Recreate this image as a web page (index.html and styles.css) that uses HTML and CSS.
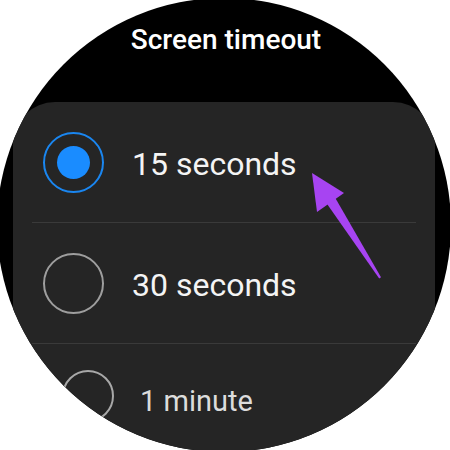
FILE: index.html
```html
<!DOCTYPE html>
<html>
<head>
<meta charset="utf-8">
<link rel="stylesheet" href="styles.css">
</head>
<body>
<div class="stage">
  <div class="watch">
    <div class="title">Screen timeout</div>
    <div class="card">
      <div class="row">
        <span class="radio on"><span class="dot"></span></span>
        <span class="label">15 seconds</span>
      </div>
      <div class="divider"></div>
      <div class="row">
        <span class="radio"></span>
        <span class="label">30 seconds</span>
      </div>
      <div class="divider"></div>
      <div class="row row-far">
        <span class="radio small"></span>
        <span class="label small-label">1 minute</span>
      </div>
    </div>
  </div>
  <svg class="arrow" width="450" height="450" viewBox="0 0 450 450">
    <polygon points="312,173 344,193 317,212" fill="#a744f2"/>
    <polygon points="333,194 325,201 379.2,278.5 381,277.3" fill="#a744f2"/>
  </svg>
</div>
</body>
</html>
```

FILE: styles.css
```css
html, body {
  margin: 0;
  padding: 0;
  background: #ffffff;
}
.stage {
  position: relative;
  width: 450px;
  height: 450px;
  overflow: hidden;
  background: #ffffff;
}
.watch {
  width: 454px;
  height: 454px;
  margin-left: -3px;
  margin-top: -2px;
  border-radius: 50%;
  background: #000000;
  overflow: hidden;
  display: flex;
  flex-direction: column;
  font-family: Roboto, "Liberation Sans", sans-serif;
}
.title {
  box-sizing: border-box;
  height: 104px;
  padding-top: 28px;
  text-align: center;
  color: #ffffff;
  font-size: 28px;
  line-height: 28px;
  font-weight: 500;
  padding-left: 4px;
}
.card {
  flex: 1;
  margin-left: 16px;
  width: 422px;
  background: #252525;
  border-radius: 42px 42px 0 0;
  display: flex;
  flex-direction: column;
}
.row {
  height: 120px;
  display: flex;
  align-items: center;
  padding-left: 30px;
  gap: 28px;
}
.radio {
  box-sizing: border-box;
  width: 61px;
  height: 61px;
  border-radius: 50%;
  border: 2px solid #9e9e9e;
  display: flex;
  align-items: center;
  justify-content: center;
  flex: none;
}
.radio.on {
  border-color: #1a86f0;
}
.dot {
  width: 33px;
  height: 33px;
  border-radius: 50%;
  background: #1a8cff;
}
.label {
  color: #f4f4f4;
  font-size: 32px;
  line-height: 32px;
  margin-top: 3px;
}
.divider {
  height: 1px;
  margin-left: 19px;
  width: 384px;
  background: #3a3a3a;
}
.row-far {
  height: 104px;
  padding-left: 49px;
  gap: 26px;
}
.radio.small {
  width: 52px;
  height: 52px;
  border-color: #a8a8a8;
}
.small-label {
  font-size: 29px;
  line-height: 28px;
  color: #dcdcdc;
  margin-top: 10px;
}
.arrow {
  position: absolute;
  left: 0;
  top: 0;
}
```
